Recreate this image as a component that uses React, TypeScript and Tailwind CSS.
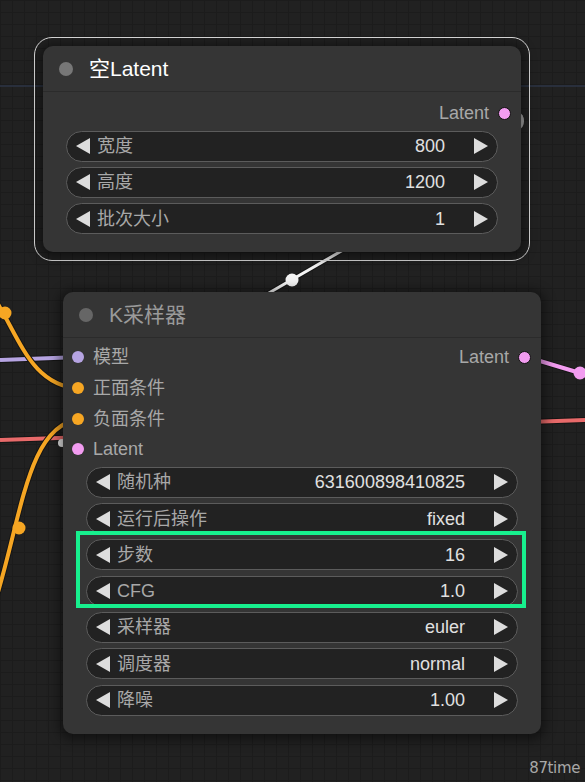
import React from 'react';

type Slot = { label: string; color: string };
type Widget = { label: string; value: string };

interface NodeProps {
  title: string;
  titleColor: string;
  dotColor: string;
  inputs: Slot[];
  output: Slot;
  widgets: Widget[];
  slotTop: string;
}

function Arrow({ dir }: { dir: 'left' | 'right' }) {
  return (
    <svg width="14" height="16" viewBox="0 0 14 16" className="shrink-0">
      {dir === 'left' ? (
        <polygon points="14,0 14,16 0,8" fill="#dddddd" />
      ) : (
        <polygon points="0,0 0,16 14,8" fill="#dddddd" />
      )}
    </svg>
  );
}

function NumberWidget({ label, value }: Widget) {
  return (
    <div className="h-[31px] rounded-full border border-[#5c5c5c] bg-[#222222] flex items-center px-[9px]">
      <Arrow dir="left" />
      <span className="ml-[7px] flex-1 text-[18px] text-[#a8a8a8] leading-none">{label}</span>
      <span className="text-[18px] text-[#e0e0e0] leading-none">{value}</span>
      <span className="ml-[29px] flex">
        <Arrow dir="right" />
      </span>
    </div>
  );
}

function GraphNode({ title, titleColor, dotColor, inputs, output, widgets, slotTop }: NodeProps) {
  const rows = Math.max(inputs.length, 1);

  return (
    <div className="w-[478px] rounded-[10px] bg-[#353535] shadow-[0_2px_12px_4px_rgba(0,0,0,0.45)]">
      {/* title bar */}
      <div className="h-[46px] flex items-center pl-[16px] border-b border-[#2b2b2b]">
        <span className="w-[14px] h-[14px] rounded-full" style={{ backgroundColor: dotColor }} />
        <span className="ml-[16px] text-[21px] leading-none" style={{ color: titleColor }}>
          {title}
        </span>
      </div>

      {/* slots */}
      <div className={`${slotTop} flex flex-col`}>
        {Array.from({ length: rows }).map((_, i) => {
          const input = inputs[i];
          return (
            <div key={i} className="h-[30.7px] flex items-center justify-between">
              <div className="flex items-center pl-[9px]">
                {input && (
                  <>
                    <span className="w-[12px] h-[12px] rounded-full" style={{ backgroundColor: input.color }} />
                    <span className="ml-[9px] text-[18px] text-[#a8a8a8] leading-none">{input.label}</span>
                  </>
                )}
              </div>
              {i === 0 && (
                <div className="flex items-center pr-[10px]">
                  <span className="text-[18px] text-[#a8a8a8] leading-none">{output.label}</span>
                  <span
                    className="ml-[9px] w-[13px] h-[13px] rounded-full border border-[#111]"
                    style={{ backgroundColor: output.color }}
                  />
                </div>
              )}
            </div>
          );
        })}
      </div>

      {/* widgets */}
      <div className="px-[23px] pt-[2px] pb-[18px] flex flex-col gap-[5.3px]">
        {widgets.map((w) => (
          <NumberWidget key={w.label} {...w} />
        ))}
      </div>
    </div>
  );
}

function Wires() {
  const orange = '#f6a623';
  return (
    <svg className="absolute inset-0" width="585" height="782" viewBox="0 0 585 782">
      {/* faint guide line */}
      <line x1="0" y1="86" x2="585" y2="86" stroke="#2d3446" strokeWidth="1.5" />

      {/* red link passing behind the sampler */}
      <line x1="0" y1="440" x2="585" y2="420" stroke="#151515" strokeWidth="6" />
      <line x1="0" y1="440" x2="585" y2="420" stroke="#e86a6a" strokeWidth="4" />

      {/* model link */}
      <line x1="0" y1="360" x2="80" y2="357" stroke="#151515" strokeWidth="6" />
      <line x1="0" y1="360" x2="80" y2="357" stroke="#b6a4e2" strokeWidth="4" />

      {/* positive / negative conditioning */}
      <path d="M -12 288 C 20 335, 28 385, 80 389" fill="none" stroke="#151515" strokeWidth="6" />
      <path d="M -12 288 C 20 335, 28 385, 80 389" fill="none" stroke={orange} strokeWidth="4" />
      <path d="M -8 612 C 22 520, 26 425, 80 419" fill="none" stroke="#151515" strokeWidth="6" />
      <path d="M -8 612 C 22 520, 26 425, 80 419" fill="none" stroke={orange} strokeWidth="4" />
      <circle cx="5" cy="313" r="6.5" fill={orange} />
      <circle cx="19" cy="528" r="6.5" fill={orange} />
      <circle cx="62" cy="443" r="4" fill="#e8e8e8" />

      {/* latent out on the right */}
      <path d="M 530 358 L 580 373 L 600 378" fill="none" stroke="#151515" strokeWidth="6" />
      <path d="M 530 358 L 580 373 L 600 378" fill="none" stroke="#f29cf0" strokeWidth="4" />
      <circle cx="580" cy="373" r="6.5" fill="#f29cf0" />

      {/* latent link between the two nodes */}
      <line x1="350" y1="246" x2="262" y2="297" stroke="#151515" strokeWidth="5" />
      <line x1="350" y1="246" x2="262" y2="297" stroke="#f4f4f4" strokeWidth="3" />
      <circle cx="292" cy="280" r="6.5" fill="#f4f4f4" />

      {/* link stub at empty latent output */}
      <ellipse cx="519" cy="121" rx="5" ry="8" fill="#a9a9a9" />
    </svg>
  );
}

export default function App() {
  return (
    <div
      className="relative w-[585px] h-[782px] overflow-hidden bg-[#212121] bg-[linear-gradient(#1c1c1c_1px,transparent_1px),linear-gradient(90deg,#1c1c1c_1px,transparent_1px)] bg-[size:12px_12px] font-['Liberation_Sans','Noto_Sans_CJK_SC',sans-serif]"
    >
      <Wires />

      {/* selected node: empty latent */}
      <div className="absolute left-[34px] top-[37px] rounded-[18px] border border-[#dedede] p-[8px]">
        <GraphNode
          title="空Latent"
          titleColor="#ffffff"
          dotColor="#777777"
          slotTop="pt-[6px]"
          inputs={[]}
          output={{ label: 'Latent', color: '#f29cf0' }}
          widgets={[
            { label: '宽度', value: '800' },
            { label: '高度', value: '1200' },
            { label: '批次大小', value: '1' },
          ]}
        />
      </div>

      {/* sampler node */}
      <div className="absolute left-[63px] top-[292px]">
        <GraphNode
          title="K采样器"
          titleColor="#9a9a9a"
          dotColor="#666666"
          slotTop="pt-[4px]"
          inputs={[
            { label: '模型', color: '#b6a4e2' },
            { label: '正面条件', color: '#f6a623' },
            { label: '负面条件', color: '#f6a623' },
            { label: 'Latent', color: '#f29cf0' },
          ]}
          output={{ label: 'Latent', color: '#f29cf0' }}
          widgets={[
            { label: '随机种', value: '631600898410825' },
            { label: '运行后操作', value: 'fixed' },
            { label: '步数', value: '16' },
            { label: 'CFG', value: '1.0' },
            { label: '采样器', value: 'euler' },
            { label: '调度器', value: 'normal' },
            { label: '降噪', value: '1.00' },
          ]}
        />
      </div>

      {/* highlight annotation */}
      <div className="absolute left-[76px] top-[531px] w-[450px] h-[77px] border-[4px] border-[#17f08e]" />

      <span className="absolute right-[5px] bottom-[3px] text-[15px] text-[#a8a8a8] font-['DejaVu_Sans',sans-serif] tracking-tight">
        87time
      </span>
    </div>
  );
}
